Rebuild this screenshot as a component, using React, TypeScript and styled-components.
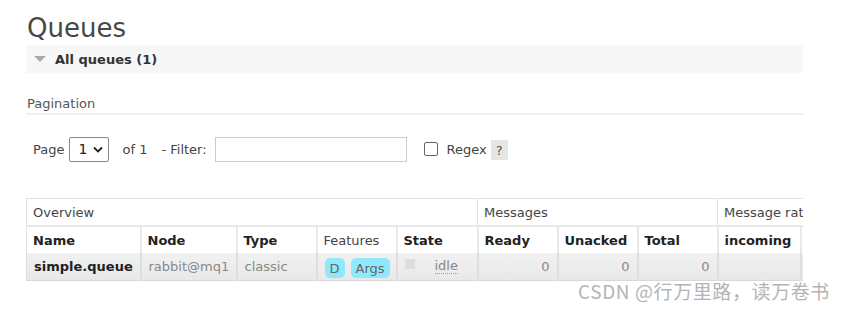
import React from "react";
import styled, { createGlobalStyle } from "styled-components";

const Global = createGlobalStyle`
  html, body { margin: 0; padding: 0; background: #fff; }
  body { font-family: "DejaVu Sans", Verdana, sans-serif; color: #444; }
`;

const Page = styled.div`
  position: relative;
  width: 844px;
  height: 310px;
  overflow: hidden;
`;

const Main = styled.div`
  width: 777px;
  margin-left: 26px;
  overflow: hidden;
`;

const Title = styled.h1`
  margin: 0;
  padding: 12px 0 0 1px;
  height: 33px;
  font-size: 26px;
  font-weight: normal;
  color: #484848;
  line-height: 33px;
`;

const SectionBar = styled.div`
  height: 28px;
  background: #f7f7f7;
  display: flex;
  align-items: center;
  gap: 9px;
  padding-left: 8px;
  font-size: 13px;
  font-weight: bold;
  color: #333;
`;

const Triangle = styled.span`
  width: 0;
  height: 0;
  border-left: 6px solid transparent;
  border-right: 6px solid transparent;
  border-top: 6px solid #aaa;
`;

const SubHeading = styled.div`
  margin-top: 23px;
  padding: 0 0 1px 1px;
  font-size: 13px;
  color: #555;
  border-bottom: 2px solid #f0f0f0;
  line-height: 16px;
`;

const Controls = styled.div`
  display: flex;
  align-items: center;
  margin-top: 21px;
  padding-left: 7px;
  height: 26px;
  font-size: 13px;
  color: #444;
`;

const Label = styled.span<{ $ml?: number; $mr?: number }>`
  margin-left: ${(p) => p.$ml ?? 0}px;
  margin-right: ${(p) => p.$mr ?? 0}px;
`;

const SelectBox = styled.div`
  width: 40px;
  height: 25px;
  box-sizing: border-box;
  border: 1px solid #888;
  border-radius: 2px;
  display: flex;
  align-items: center;
  padding-left: 8px;
  gap: 6px;
  color: #222;
  font-size: 14px;
  margin-left: 1px;
`;

const FilterInput = styled.div`
  width: 192px;
  height: 25px;
  box-sizing: border-box;
  border: 1px solid #ccc;
  margin-left: 8px;
`;

const Check = styled.span`
  width: 12px;
  height: 12px;
  border: 1px solid #666;
  border-radius: 2px;
  margin-left: 17px;
  margin-right: 9px;
`;

const Help = styled.span`
  background: #e6e6e6;
  width: 17px;
  height: 20px;
  display: inline-flex;
  align-items: center;
  justify-content: center;
  margin-left: 4px;
  margin-top: 2px;
  color: #555;
  font-size: 13px;
`;

const Table = styled.table`
  margin-top: 36px;
  border-collapse: collapse;
  table-layout: fixed;
  width: 880px;
  font-size: 13px;
`;

const GroupTh = styled.th`
  text-align: left;
  font-weight: normal;
  color: #444;
  height: 26px;
  padding: 0 6px;
  border: 1px solid #e2e2e2;
  border-bottom: 2px solid #e8e8e8;
  white-space: nowrap;
  overflow: hidden;
`;

const Th = styled.th<{ $bold?: boolean }>`
  text-align: left;
  font-weight: ${(p) => (p.$bold === false ? "normal" : "bold")};
  color: ${(p) => (p.$bold === false ? "#444" : "#222")};
  height: 26px;
  padding: 0 6px;
  border-left: 2px solid #e8e8e8;
  white-space: nowrap;
  overflow: hidden;
`;

const Tr = styled.tr`
  background: linear-gradient(#f1f1f1, #e8e8e8);
  box-shadow: 0 1px 1px #ccc;
`;

const Td = styled.td<{ $right?: boolean; $bold?: boolean }>`
  height: 27px;
  padding: 0 7px;
  border-left: 2px solid #dedede;
  border-bottom: 1px solid #d8d8d8;
  text-align: ${(p) => (p.$right ? "right" : "left")};
  font-weight: ${(p) => (p.$bold ? "bold" : "normal")};
  color: ${(p) => (p.$bold ? "#222" : "#888")};
  white-space: nowrap;
  vertical-align: middle;
`;

const Badges = styled.div`
  display: flex;
  gap: 6px;
  padding-top: 3px;
`;

const Badge = styled.span`
  background: #8ee9fb;
  color: #666;
  border-radius: 5px;
  padding: 3px 5px 2px;
  font-size: 13px;
`;

const StateBox = styled.div`
  display: flex;
  align-items: center;
`;

const StateSquare = styled.span`
  width: 10px;
  height: 10px;
  background: #ddd;
  margin-right: 20px;
  margin-top: -6px;
`;

const Abbr = styled.span`
  color: #888;
  border-bottom: 1px dotted #999;
  line-height: 14px;
`;

const Watermark = styled.div`
  position: absolute;
  left: 578px;
  top: 277px;
  font-family: "Noto Sans CJK SC", "DejaVu Sans", sans-serif;
  font-size: 19px;
  letter-spacing: 0.6px;
  color: #b4b4b4;
  white-space: nowrap;
`;

export default function App() {
  return (
    <Page>
      <Global />
      <Main>
        <Title>Queues</Title>
        <SectionBar>
          <Triangle />
          All queues (1)
        </SectionBar>
        <SubHeading>Pagination</SubHeading>
        <Controls>
          <Label $mr={4}>Page</Label>
          <SelectBox>
            1
            <svg width="10" height="7" viewBox="0 0 10 7">
              <path d="M1 1.5 L5 5.5 L9 1.5" fill="none" stroke="#222" strokeWidth="1.8" />
            </svg>
          </SelectBox>
          <Label $ml={13}>of 1</Label>
          <Label $ml={14}>- Filter:</Label>
          <FilterInput />
          <Check />
          <Label>Regex</Label>
          <Help>?</Help>
        </Controls>
        <Table>
          <colgroup>
            <col style={{ width: 114 }} />
            <col style={{ width: 96 }} />
            <col style={{ width: 80 }} />
            <col style={{ width: 80 }} />
            <col style={{ width: 81 }} />
            <col style={{ width: 80 }} />
            <col style={{ width: 80 }} />
            <col style={{ width: 80 }} />
            <col style={{ width: 83 }} />
            <col style={{ width: 106 }} />
          </colgroup>
          <thead>
            <tr>
              <GroupTh colSpan={5}>Overview</GroupTh>
              <GroupTh colSpan={3}>Messages</GroupTh>
              <GroupTh colSpan={2}>Message rates</GroupTh>
            </tr>
            <tr>
              <Th style={{ borderLeft: "1px solid #e2e2e2" }}>Name</Th>
              <Th>Node</Th>
              <Th>Type</Th>
              <Th $bold={false}>Features</Th>
              <Th>State</Th>
              <Th>Ready</Th>
              <Th>Unacked</Th>
              <Th>Total</Th>
              <Th>incoming</Th>
              <Th>deliver / get</Th>
            </tr>
          </thead>
          <tbody>
            <Tr>
              <Td $bold style={{ borderLeft: "1px solid #dedede" }}>simple.queue</Td>
              <Td>rabbit@mq1</Td>
              <Td>classic</Td>
              <Td>
                <Badges>
                  <Badge>D</Badge>
                  <Badge>Args</Badge>
                </Badges>
              </Td>
              <Td>
                <StateBox>
                  <StateSquare />
                  <Abbr>idle</Abbr>
                </StateBox>
              </Td>
              <Td $right>0</Td>
              <Td $right>0</Td>
              <Td $right>0</Td>
              <Td></Td>
              <Td></Td>
            </Tr>
          </tbody>
        </Table>
      </Main>
      <Watermark>CSDN @行万里路，读万卷书</Watermark>
    </Page>
  );
}
